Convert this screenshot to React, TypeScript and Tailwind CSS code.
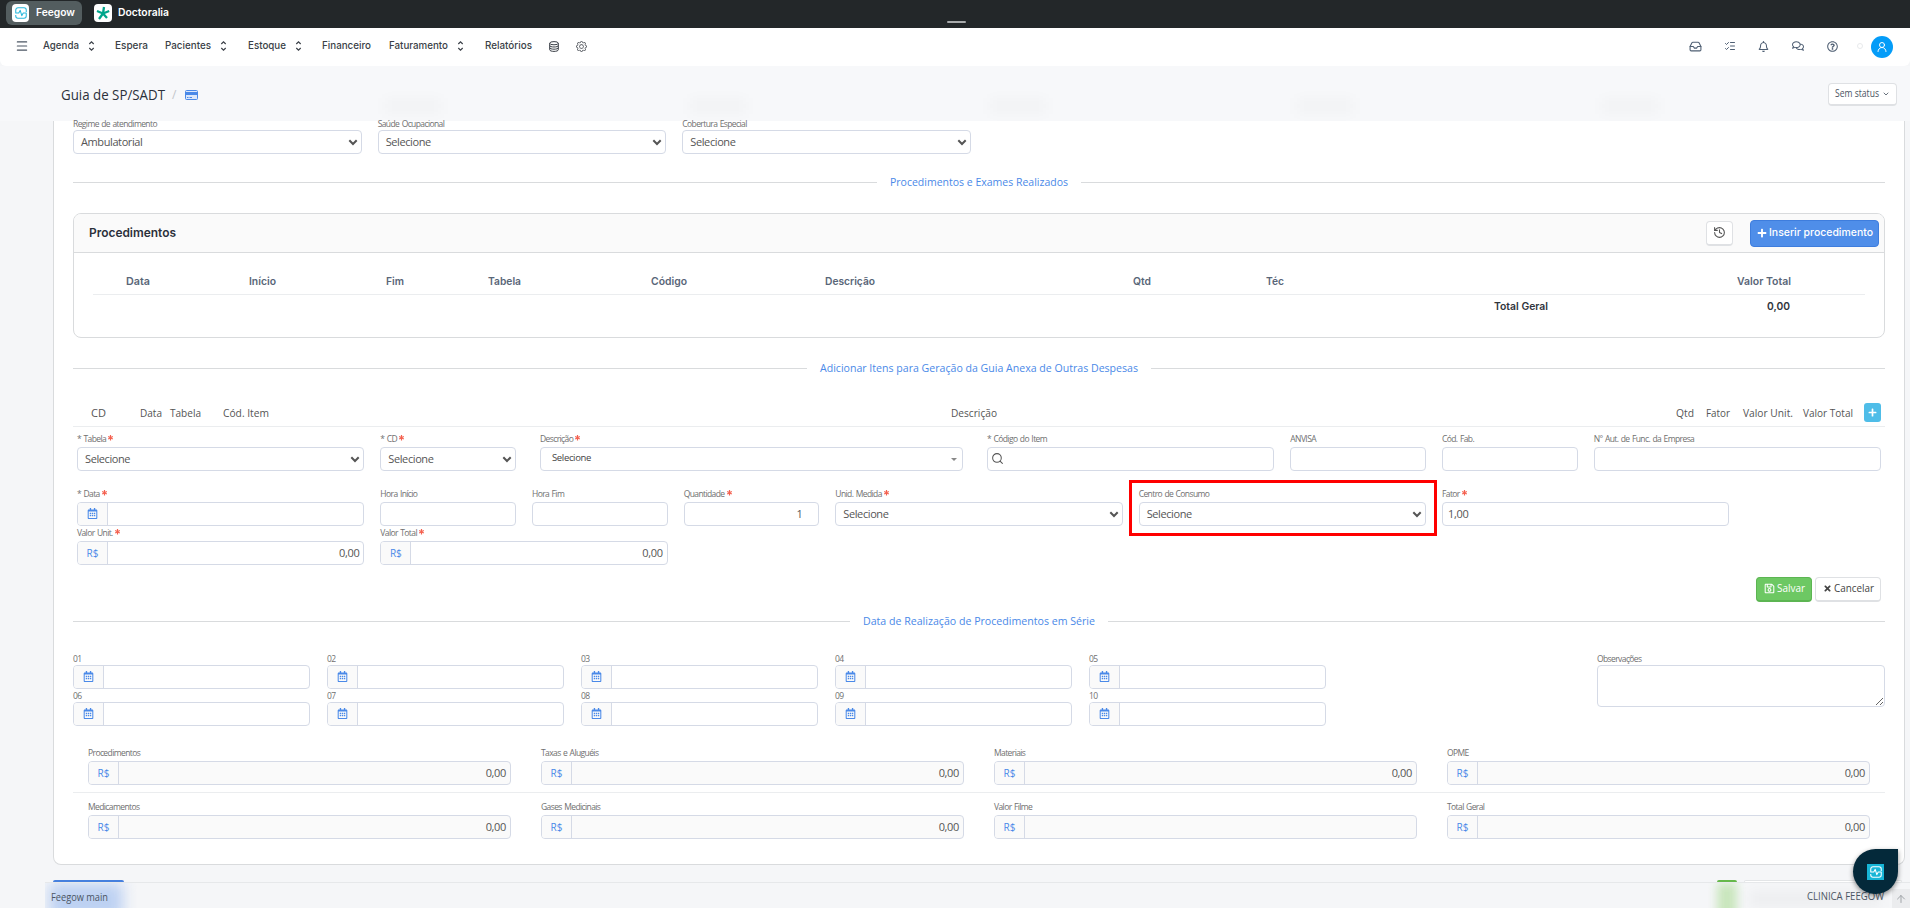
import React from "react";
import { FaPlus, FaTimes, FaRegSave, FaRegBell, FaRegCalendarAlt, FaRegComments, FaRegQuestionCircle } from "react-icons/fa";
import { BsGear } from "react-icons/bs";
import { ArrowUp, ChevronDown, History, Inbox, ListChecks, Menu, Search, UserRound } from "lucide-react";

const NAV = [
  { label: "Agenda", pos: "w-[72px]", width: 36, more: true },
  { label: "Espera", pos: "w-[50px]", width: 33 },
  { label: "Pacientes", pos: "w-[83px]", width: 46, more: true },
  { label: "Estoque", pos: "w-[74px]", width: 38, more: true },
  { label: "Financeiro", pos: "w-[67px]", width: 49 },
  { label: "Faturamento", pos: "w-[96px]", width: 59, more: true },
  { label: "Relatórios", pos: "w-[64px]", width: 47 },
];

// keeps a label at a fixed width whatever the installed font
function Txt({ w, size = 11, children, className = "" }: { w: number; size?: number; children: string; className?: string }) {
  return (
    <svg width={w} height={size + 6} className={`block shrink-0 overflow-visible ${className}`}>
      <text x="0" y={size} textLength={w} lengthAdjust="spacingAndGlyphs" fontSize={size} fill="currentColor">
        {children}
      </text>
    </svg>
  );
}

function Pulse({ className }: { className: string }) {
  return (
    <svg viewBox="0 0 16 16" className={className} fill="none" stroke="currentColor" strokeWidth="1.4" strokeLinejoin="round">
      <path d="M15 6.500V4a3 3 0 0 0-3-3H4a3 3 0 0 0-3 3v4h4l2-3.500 2 7L11 8h4v4a3 3 0 0 1-3 3H4a3 3 0 0 1-3-3v-1.500" />
    </svg>
  );
}

function Label({ children, req }: { children: string; req?: boolean }) {
  return (
    <div className="flex h-3 items-center gap-[3px] whitespace-nowrap text-[8.5px] leading-3 tracking-[-0.6px] [word-spacing:0.8px] text-[#707070]">
      <span>{children}</span>
      {req ? (
        <svg width="5" height="6" viewBox="0 0 5 6" className="-ml-px -mt-0.5" stroke="#f4604f" strokeWidth="1.200">
          <path d="M2.500 0v5.500M.2 1.400l4.600 2.700M4.800 1.400.2 4.100" />
        </svg>
      ) : null}
    </div>
  );
}

type FieldProps = {
  label: string;
  req?: boolean;
  value?: string;
  kind?: "text" | "select" | "combo" | "date" | "money" | "search";
  right?: boolean;
  disabled?: boolean;
  gap?: string;
  className?: string;
};

function Field({ label, req, value = "", kind = "text", right, disabled, gap = "mt-0.5", className = "" }: FieldProps) {
  const addon = kind === "date" || kind === "money";
  const valueStyle =
    kind === "combo"
      ? "pl-[11px] text-[9.5px] tracking-[-0.35px] text-[#444]"
      : kind === "select"
        ? "pl-[7px] text-[11px] tracking-[-0.4px]"
        : "pl-[5px] text-[11px] tracking-[-0.35px]";
  return (
    <div className={`min-w-0 ${className}`}>
      <Label req={req}>{label}</Label>
      <div className={`flex h-6 overflow-hidden rounded border border-[#d5dae6] text-[#555] ${gap} ${disabled ? "bg-[#fafafa]" : "bg-white"}`}>
        {addon ? (
          <span className="flex w-[30px] shrink-0 items-center justify-center border-r border-[#d5dae6] bg-[#fafafa] text-[10px] font-medium text-[#4a89e8]">
            {kind === "date" ? <FaRegCalendarAlt size={11} className="mb-0.5" /> : <span className="pt-px">R$</span>}
          </span>
        ) : null}
        {kind === "search" ? <Search size={13} strokeWidth={1.9} className="ml-[3px] mt-1 text-[#555]" /> : null}
        <span
          className={`flex min-w-0 flex-1 items-center pb-[2px] leading-none ${right || kind === "money" ? "justify-end" : ""} ${valueStyle} ${
            right ? "pr-4" : "pr-1"
          }`}
        >
          {value}
        </span>
        {kind === "select" ? (
          <svg width="10" height="7" viewBox="0 0 9 7" className="mr-[3px] mt-2 shrink-0" fill="none" stroke="#555" strokeWidth="2">
            <path d="M.8 1.200 4.500 5l3.700-3.800" />
          </svg>
        ) : null}
        {kind === "combo" ? <span className="mr-[5px] mt-[10px] h-0 w-0 border-x-[3px] border-t-[3px] border-x-transparent border-t-[#888]" /> : null}
      </div>
    </div>
  );
}

function Section({ title, width }: { title: string; width: number }) {
  return (
    <div className="flex h-4 items-center gap-[13px]">
      <span className="h-px flex-1 bg-[#d9dbdd]" />
      <span className="pt-px text-[#4a89e8]">
        <Txt w={width} size={11.5}>{title}</Txt>
      </span>
      <span className="h-px flex-1 bg-[#d9dbdd]" />
    </div>
  );
}

function TopBar() {
  return (
    <div className="relative flex h-7 items-start bg-[#232729] font-[Inter,sans-serif] font-semibold text-white">
      <div className="ml-[6px] mt-px flex h-6 w-[76px] items-center gap-[7px] rounded-md bg-[#535d5f] pl-[6px]">
        <span className="flex h-[18px] w-[17px] shrink-0 items-center justify-center rounded bg-white">
          <Pulse className="h-3 w-3 text-[#28b8dc]" />
        </span>
        <Txt w={39} size={10.5}>Feegow</Txt>
      </div>
      <div className="ml-3 mt-px flex h-6 items-center gap-[6px]">
        <span className="flex h-[18px] w-[18px] items-center justify-center rounded bg-white">
          <svg viewBox="0 0 14 14" className="h-[14px] w-[14px]" stroke="#00a58b" strokeWidth="2.300">
            <path d="M7 7.500 8 1M7 7.500 13.200 5M7 7.500l4 4.500M7 7.500 3 13M7 7.500 1 5" />
          </svg>
        </span>
        <Txt w={51} size={10.5}>Doctoralia</Txt>
      </div>
      <span className="absolute left-[947px] top-[21px] h-0.5 w-[19px] rounded bg-[#a8aaab]" />
    </div>
  );
}

function NavBar() {
  return (
    <div className="flex h-[38px] items-center rounded-b-md bg-white pb-[2px] pl-[15px] font-[Inter,sans-serif] text-[#3a3f47]">
      <Menu size={14} strokeWidth={1.9} className="mr-[14px] text-[#4b5563]" />
      {NAV.map((item) => (
        <div key={item.label} className={`flex items-center ${item.pos}`}>
          <span className="font-medium">
            <Txt w={item.width} size={10.5}>{item.label}</Txt>
          </span>
          {item.more ? (
            <svg width="7" height="10" viewBox="0 0 7 10" className="ml-[9px]" fill="none" stroke="#3a3f47" strokeWidth="1.200">
              <path d="M1.300 3 3.500.9 5.700 3M1.300 7l2.200 2.100L5.700 7" />
            </svg>
          ) : null}
        </div>
      ))}
      <svg width="10" height="11" viewBox="0 0 10 11" fill="none" stroke="currentColor" strokeWidth="1">
        <ellipse cx="5" cy="2.200" rx="4.300" ry="1.600" />
        <path d="M.7 2.200v6.600c0 .9 1.900 1.600 4.300 1.600s4.300-.7 4.300-1.600V2.200M.7 4.500c0 .9 1.900 1.500 4.300 1.500s4.300-.6 4.300-1.500M.7 6.700c0 .9 1.900 1.500 4.300 1.500s4.300-.6 4.300-1.500" />
      </svg>
      <BsGear size={11} className="ml-[17px]" />
      <div className="ml-auto mr-[17px] flex items-center text-[#4f5f73]">
        <Inbox size={13} strokeWidth={2} className="mr-[22px]" />
        <ListChecks size={12} strokeWidth={2} className="mr-[22px]" />
        <FaRegBell size={11} className="mr-[23px]" />
        <FaRegComments size={12} className="mr-[23px]" />
        <FaRegQuestionCircle size={11} className="mr-[19px]" />
        <span className="mr-[8px] h-[6px] w-[6px] rounded-full border border-[#e8eaec]" />
        <span className="mt-[2px] flex h-[22px] w-[22px] items-center justify-center rounded-full bg-[#049cf8] text-white">
          <UserRound size={12} strokeWidth={2} />
        </span>
      </div>
    </div>
  );
}

function TitleBar() {
  return (
    <div className="relative flex h-[55px] items-center overflow-hidden bg-[#f7f8fa] pl-[61px] pr-[13px]">
      {[385, 690, 990, 1297, 1602].map((x) => (
        <span key={x} className="absolute top-8 h-4 w-14 bg-black/[0.018] blur-[6px]" style={{ left: x }} />
      ))}
      <span className="pt-1 text-[#2b303b]">
        <Txt w={104} size={14.5}>Guia de SP/SADT</Txt>
      </span>
      <span className="ml-[7px] pt-0.5 text-xs text-[#c3c6ca]">/</span>
      <svg width="13" height="10" viewBox="0 0 13 10" className="ml-[9px] mt-[3px]">
        <rect x=".5" y=".5" width="12" height="9" rx="1" fill="#dbe7fb" stroke="#4a89e8" />
        <path d="M0 2h13v3H0z" fill="#4a89e8" />
        <path d="M2 7.500h1.500M4.500 7.500H7" stroke="#4a89e8" />
      </svg>
      <button className="ml-auto mt-[2px] flex h-[23px] w-[69px] items-center justify-center gap-[3px] rounded border border-b-2 border-[#dfe1e4] bg-white text-[#4b5563]">
        <Txt w={44} size={10.5} className="mt-px">Sem status</Txt>
        <ChevronDown size={8} strokeWidth={2.5} />
      </button>
    </div>
  );
}

const COLS = [
  ["Data", 24, "w-[123px]"],
  ["Início", 27, "w-[137px]"],
  ["Fim", 18, "w-[102px]"],
  ["Tabela", 33, "w-[163px]"],
  ["Código", 36, "w-[174px]"],
  ["Descrição", 50, "w-[308px]"],
  ["Qtd", 18, "w-[133px]"],
  ["Téc", 18, "w-[471px]"],
  ["Valor Total", 54, "w-[54px]"],
] as const;

function Procedures() {
  return (
    <div className="mt-[23px] h-[125px] overflow-hidden rounded-lg border border-[#d9dbdd] font-[Inter,sans-serif]">
      <div className="flex h-[39px] items-center border-b border-[#d9dbdd] bg-[#fafafa] pl-[15px] pr-[5px]">
        <span className="pt-px font-semibold text-[#2b303b]">
          <Txt w={87} size={12}>Procedimentos</Txt>
        </span>
        <button className="ml-auto flex h-[25px] w-[27px] items-center justify-center rounded border border-b-2 border-[#dfe1e4] bg-white text-[#555]">
          <History size={13} strokeWidth={2} />
        </button>
        <button className="ml-[17px] flex h-[27px] w-[129px] items-center justify-center gap-[2px] rounded border border-[#3e7ddd] bg-[#4f8ee9] font-medium text-white">
          <FaPlus size={10} className="shrink-0" />
          <Txt w={104} size={11}>Inserir procedimento</Txt>
        </button>
      </div>
      <div className="mx-[19px] mt-[17px] flex h-[25px] items-center border-b border-[#ebedef] pl-[33px] pt-px font-semibold text-[#596678]">
        {COLS.map(([label, width, col]) => (
          <div key={label} className={`shrink-0 ${col}`}>
            <Txt w={width} size={10.5}>{label}</Txt>
          </div>
        ))}
      </div>
      <div className="flex h-[24px] items-center justify-end pr-[94px] font-semibold text-[#30353d]">
        <Txt w={54} size={10.5} className="mr-[219px]">Total Geral</Txt>
        <Txt w={23} size={10.5}>0,00</Txt>
      </div>
    </div>
  );
}

function Expenses() {
  return (
    <>
      <div className="mt-[26px] flex h-[25px] items-center border-b border-[#ebedef] pl-[18px] text-[#555]">
        <Txt w={15}>CD</Txt>
        <Txt w={22} className="ml-[34px]">Data</Txt>
        <Txt w={31} className="ml-[8px]">Tabela</Txt>
        <Txt w={46} className="ml-[22px]">Cód. Item</Txt>
        <Txt w={46} className="ml-[682px]">Descrição</Txt>
        <Txt w={18} className="ml-auto">Qtd</Txt>
        <Txt w={24} className="ml-[12px]">Fator</Txt>
        <Txt w={50} className="ml-[13px]">Valor Unit.</Txt>
        <Txt w={50} className="ml-[10px]">Valor Total</Txt>
        <button className="mb-1 ml-[11px] mr-1 flex h-[19px] w-[17px] items-center justify-center rounded-[3px] bg-[#4fbde8] text-white">
          <FaPlus size={9} />
        </button>
      </div>
      <div className="mx-1 mt-[6px] grid grid-cols-12 gap-x-4">
        <Field className="col-span-2" label="* Tabela" req kind="select" value="Selecione" />
        <Field label="* CD" req kind="select" value="Selecione" />
        <Field className="col-span-3 mx-2" label="Descrição" req kind="combo" value="Selecione" />
        <Field className="col-span-2" label="* Código do Item" kind="search" />
        <Field label="ANVISA" />
        <Field label="Cód. Fab." />
        <Field className="col-span-2" label="N° Aut. de Func. da Empresa" />
      </div>
      <div className="mx-1 mt-[17px] grid grid-cols-12 gap-x-4">
        <Field className="col-span-2" label="* Data" req kind="date" />
        <Field label="Hora Início" />
        <Field label="Hora Fim" />
        <Field label="Quantidade" req value="1" right />
        <Field className="col-span-2" label="Unid. Medida" req kind="select" value="Selecione" />
        <div className="relative col-span-2">
          <Field label="Centro de Consumo" kind="select" value="Selecione" />
          <span className="pointer-events-none absolute -bottom-[10px] -left-[10px] -right-[11px] -top-[8px] border-[3px] border-[#ff0000]" />
        </div>
        <Field className="col-span-2" label="Fator" req value="1,00" />
      </div>
      <div className="mx-1 mt-px grid grid-cols-12 gap-x-4">
        <Field className="col-span-2" label="Valor Unit." req kind="money" value="0,00" />
        <Field className="col-span-2" label="Valor Total" req kind="money" value="0,00" />
      </div>
      <div className="mr-1 mt-3 flex h-[25px] justify-end gap-[3px]">
        <button className="flex w-[56px] items-center justify-center gap-[2px] rounded border border-b-2 border-[#5cb552] bg-[#6dc863] pb-px text-white">
          <FaRegSave size={11} />
          <Txt w={28} size={11.5}>Salvar</Txt>
        </button>
        <button className="flex w-[66px] items-center justify-center gap-[2px] rounded border border-b-2 border-[#dfe1e4] bg-white pb-px text-[#444]">
          <FaTimes size={9} />
          <Txt w={40} size={11.5}>Cancelar</Txt>
        </button>
      </div>
    </>
  );
}

const TOTALS = [
  ["Procedimentos", "Taxas e Aluguéis", "Materiais", "OPME"],
  ["Medicamentos", "Gases Medicinais", "Valor Filme", "Total Geral"],
];

export default function App() {
  return (
    <div className="relative h-[908px] w-[1910px] overflow-hidden bg-[#f5f6f8] font-['Open_Sans','Noto_Sans',sans-serif]">
      <TopBar />
      <NavBar />
      <TitleBar />
      <div className="ml-[53px] mr-[5px] h-[744px] rounded-b-lg border border-t-0 border-[#d9dbdd] bg-white px-[19px]">
        <div className="relative -top-[3px] -mb-[3px] grid grid-cols-6 gap-x-4">
          <Field gap="mt-0" label="Regime de atendimento" kind="select" value="Ambulatorial" />
          <Field gap="mt-0" label="Saúde Ocupacional" kind="select" value="Selecione" />
          <Field gap="mt-0" label="Cobertura Especial" kind="select" value="Selecione" />
        </div>
        <div className="mt-5">
          <Section title="Procedimentos e Exames Realizados" width={178} />
        </div>
        <Procedures />
        <div className="mt-[22px]">
          <Section title="Adicionar Itens para Geração da Guia Anexa de Outras Despesas" width={318} />
        </div>
        <Expenses />
        <div className="mt-[11px]">
          <Section title="Data de Realização de Procedimentos em Série" width={232} />
        </div>
        <div className="mt-[24px] flex justify-between">
          <div className="grid w-[1253px] grid-cols-5 gap-x-[17px] gap-y-px">
            {["01", "02", "03", "04", "05", "06", "07", "08", "09", "10"].map((n) => (
              <Field key={n} gap="mt-0" label={n} kind="date" />
            ))}
          </div>
          <div className="w-[288px]">
            <Label>Observações</Label>
            <textarea className="block h-[42px] w-full resize rounded border border-[#d5dae6] bg-white" />
          </div>
        </div>
        {TOTALS.map((row, i) => (
          <div
            key={row[0]}
            className={i === 0 ? "mt-[21px] grid grid-cols-4 gap-x-[30px] border-b border-[#ebedef] px-[15px] pb-[7px]" : "mt-[8px] grid grid-cols-4 gap-x-[30px] px-[15px]"}
          >
            {row.map((label) => (
              <Field key={label} label={label} kind="money" disabled value={label === "Valor Filme" ? "" : "0,00"} />
            ))}
          </div>
        ))}
      </div>
      {/* action buttons peeking out above the footer */}
      <div className="mt-[15px] flex h-[2px] pl-[53px]">
        <span className="h-full w-[71px] rounded-t bg-[#4680de]" />
        <span className="ml-[1593px] h-full w-[20px] rounded-t bg-[#66b94b]" />
        <span className="ml-[7px] h-full w-[158px] rounded-t border border-b-0 border-[#e3e5e7] bg-white" />
      </div>
      <div className="relative ml-[45px] flex h-[26px] items-center overflow-hidden border-t border-[#e6e8ea] bg-[#f5f6f8] pl-[6px] text-[#4b5563]">
        <span className="absolute left-1 top-0 h-9 w-[74px] bg-[#bdd1f2] blur-[7px]" />
        <span className="absolute left-[1672px] top-0 h-9 w-[20px] bg-[#c9e6bd] blur-[5px]" />
        <span className="absolute left-[1705px] top-2 h-4 w-[130px] bg-black/[0.03] blur-[6px]" />
        <Txt w={57} className="relative mt-[5px]">Feegow main</Txt>
        <Txt w={77} size={10.5} className="relative ml-auto mr-[8px] mt-[4px]">CLINICA FEEGOW</Txt>
        <span className="flex h-[19px] w-[18px] items-center justify-center self-end bg-[#ebecee] text-[#a0a4a8]">
          <ArrowUp size={12} />
        </span>
      </div>
      <div className="absolute left-[1853px] top-[849px] flex h-[45px] w-[45px] items-center justify-center rounded-full rounded-tr-md bg-[#04293a] shadow-[0_2px_5px_rgba(0,0,0,0.45)]">
        <span className="flex h-4 w-[17px] items-center justify-center bg-[#17b5d6]">
          <Pulse className="h-3 w-3 text-white" />
        </span>
      </div>
    </div>
  );
}
